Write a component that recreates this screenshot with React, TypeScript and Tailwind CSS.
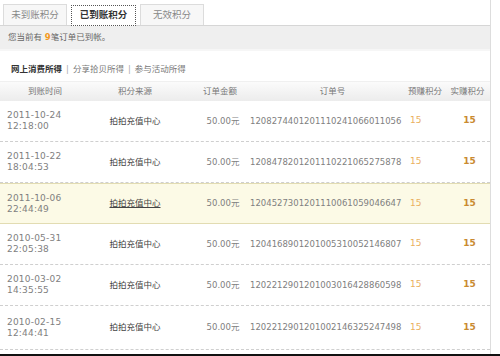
import React from "react";

type Row = {
  date: string;
  time: string;
  order: string;
  hover?: boolean;
  tall?: boolean;
};

const rows: Row[] = [
  { date: "2011-10-24", time: "12:18:00", order: "1208274401201110241066011056" },
  { date: "2011-10-22", time: "18:04:53", order: "1208478201201110221065275878" },
  { date: "2011-10-06", time: "22:44:49", order: "1204527301201110061059046647", hover: true },
  { date: "2010-05-31", time: "22:05:38", order: "1204168901201005310052146807" },
  { date: "2010-03-02", time: "14:35:55", order: "1202212901201003016428860598" },
  { date: "2010-02-15", time: "12:44:41", order: "1202212901201002146325247498", tall: true },
];

const font = { fontFamily: '"DejaVu Sans", "Noto Sans CJK SC", sans-serif' };

function Tab({ label, active }: { label: string; active?: boolean }) {
  return (
    <div
      className={
        active
          ? "h-[21px] w-[65px] flex items-center justify-center border border-dotted border-[#555] bg-white text-[9.5px] font-bold text-[#333] -mb-px"
          : "h-[21px] w-[64px] flex items-center justify-center border border-[#dcdcdc] border-b-0 bg-[#f7f7f7] text-[9.5px] text-[#888]"
      }
    >
      {label}
    </div>
  );
}

export default function App() {
  return (
    <div className="w-[500px] h-[356px] bg-white overflow-hidden flex flex-col" style={font}>
      <div className="w-[491px] flex-1 border-r border-[#dddddd] flex flex-col">
        {/* tabs */}
        <div className="h-[26px] flex items-end gap-[4px] pl-[3px] border-b border-[#d6d6d6]">
          <Tab label="未到账积分" />
          <Tab label="已到账积分" active />
          <Tab label="无效积分" />
        </div>

        {/* summary */}
        <div className="h-[25px] bg-[#efefef] flex items-center pl-[8px] text-[8.5px] text-[#666] border-b-2 border-[#f6f6f6]">
          您当前有&nbsp;<span className="text-[#f39a1e] font-bold">9</span>笔订单已到帐。
        </div>

        {/* sub links */}
        <div className="h-[30px] flex items-center pl-[11px] pt-[7px] text-[8.5px] text-[#777]">
          <span className="font-bold text-[#333]">网上消费所得</span>
          <span className="mx-[4px] text-[#aaa]">|</span>
          <span>分享拾贝所得</span>
          <span className="mx-[4px] text-[#aaa]">|</span>
          <span>参与活动所得</span>
        </div>

        {/* header */}
        <div className="h-[20px] flex items-center text-[8.5px] text-[#777] bg-gradient-to-b from-[#fbfbfb] to-[#ececec] border-t border-[#f0f0f0]">
          <div className="w-[90px] text-center">到账时间</div>
          <div className="w-[90px] text-center">积分来源</div>
          <div className="w-[80px] text-center">订单金额</div>
          <div className="w-[145px] text-center">订单号</div>
          <div className="w-[40px] text-center">预赚积分</div>
          <div className="flex-1 text-center">实赚积分</div>
        </div>

        {/* rows */}
        {rows.map((r) => (
          <div
            key={r.order}
            className={
              (r.tall ? "h-[44px] " : "h-[41px] ") +
              (r.hover
                ? "bg-[#fcfae6] border-y border-[#e2dcb2]"
                : "border-b border-dashed border-[#cfcfcf]") +
              " flex items-center text-[#808080]"
            }
          >
            <div className="w-[90px] pl-[7px] text-[9px] leading-[11px] tracking-[0.2px]">
              <div>{r.date}</div>
              <div>{r.time}</div>
            </div>
            <div className="w-[90px] text-center text-[8.5px] text-[#444]">
              <span className={r.hover ? "underline" : ""}>拍拍充值中心</span>
            </div>
            <div className="w-[80px] text-center text-[8.5px] pl-[6px]">50.00元</div>
            <div className="w-[145px] text-[8.5px] -ml-[10px] mr-[10px]">{r.order}</div>
            <div className="w-[40px] pl-[5px] text-[9px] text-[#eab060]">15</div>
            <div className="flex-1 text-center text-[9px] font-bold text-[#c98a30] pl-[4px]">15</div>
          </div>
        ))}
      </div>
      <div className="h-[2px] bg-[#111]" />
    </div>
  );
}
